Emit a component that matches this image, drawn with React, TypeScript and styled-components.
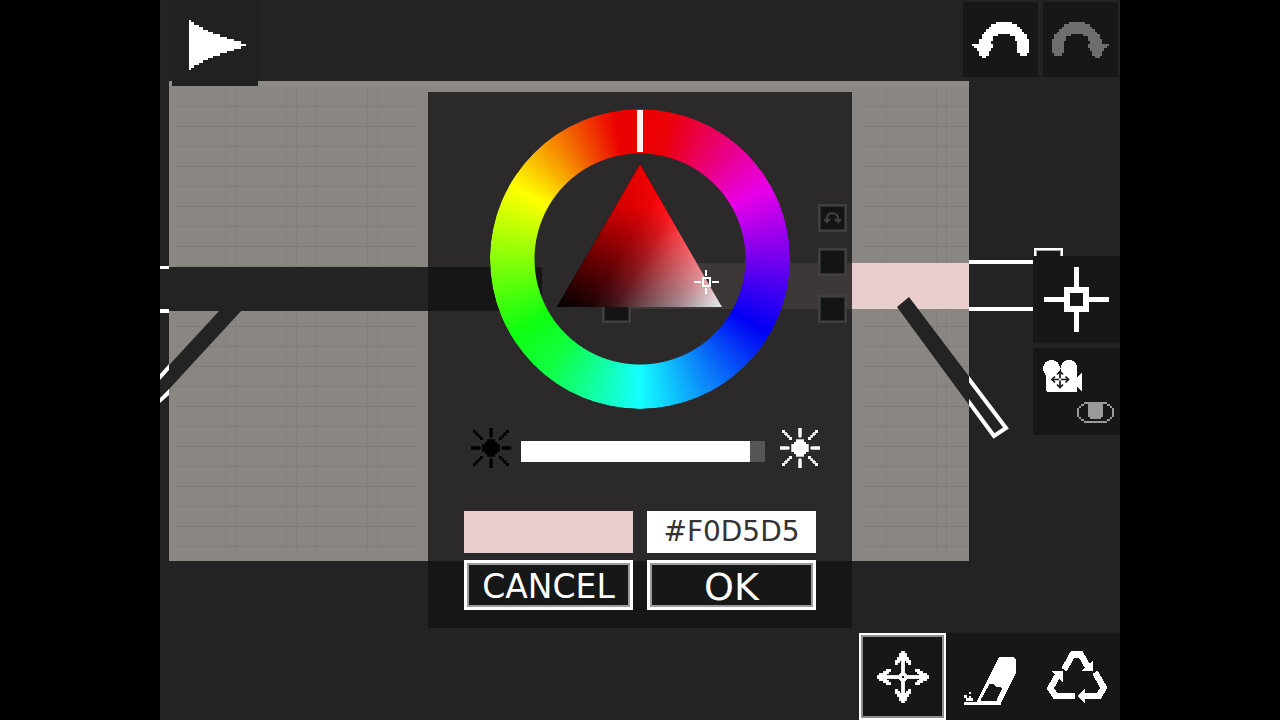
import React, { useState } from 'react';
import styled, { createGlobalStyle } from 'styled-components';

const GlobalStyle = createGlobalStyle`
  *, *::before, *::after { box-sizing: border-box; }
  body {
    margin: 0;
    background: #000;
    font-family: 'DejaVu Sans', sans-serif;
  }
`;

const Stage = styled.main`
  position: relative;
  display: flex;
  flex-direction: column;
  width: 75vw;
  min-height: 100vh;
  margin: 0 auto;
  overflow: hidden;
  background: #232323;
`;

const SceneCanvas = styled.svg`
  position: absolute;
  inset: 0;
  width: 100%;
  height: 100%;
`;

const TopBar = styled.header`
  position: relative;
  display: flex;
  justify-content: space-between;
  align-items: flex-start;
  padding: 0 2px 0 12px;
`;

const History = styled.div`
  display: flex;
  gap: 5px;
  padding-top: 2px;
`;

const SideTools = styled.nav`
  position: relative;
  flex: 1;
  display: flex;
  flex-direction: column;
  justify-content: center;
  align-items: flex-end;
  gap: 5px;
  padding-bottom: 28px;
`;

const BottomTools = styled.footer`
  position: relative;
  display: flex;
  justify-content: flex-end;
`;

const ToolButton = styled.button<{ $size: number; $tone?: string; $selected?: boolean }>`
  display: flex;
  align-items: center;
  justify-content: center;
  width: ${(p) => p.$size}px;
  height: ${(p) => p.$size}px;
  padding: 0;
  border: ${(p) => (p.$selected ? '2px solid #fff' : '0')};
  box-shadow: ${(p) => (p.$selected ? 'inset 0 0 0 2px #8f8f8f' : 'none')};
  background: ${(p) => p.$tone ?? '#171717'};
  color: #fff;
  cursor: pointer;

  &:disabled {
    color: #6e6e6e;
    cursor: default;
  }
`;

const PlayButton = styled(ToolButton)`
  padding: 3px 0 0 4px;
`;

const CameraStack = styled.span`
  display: flex;
  flex-direction: column;
  gap: 9px;
  width: 74px;
  padding-left: 3px;
`;

const EyeSlot = styled.span`
  display: flex;
  justify-content: flex-end;
  color: #9a9a9a;
`;

const Icon = styled.svg`
  display: block;
  fill: currentColor;
`;

const ModalLayer = styled.div`
  position: absolute;
  inset: 0;
  display: flex;
  align-items: center;
  justify-content: center;
  pointer-events: none;
`;

const Picker = styled.form`
  display: flex;
  flex-direction: column;
  align-items: center;
  width: 424px;
  max-width: 100%;
  padding: 17px 36px 18px;
  background: rgba(21, 20, 21, 0.81);
  pointer-events: auto;
`;

const Wheel = styled.div`
  position: relative;
  width: 300px;
  height: 300px;
`;

const HueRing = styled.div`
  width: 100%;
  height: 100%;
  border-radius: 50%;
  background: conic-gradient(
    #eb0000 0deg,
    #eb0008 12deg,
    #e800e8 60deg,
    #0000f4 120deg,
    #14ffff 180deg,
    #10ff40 220deg,
    #10ff10 240deg,
    #ffff00 300deg,
    #eb0000 350deg,
    #eb0000 360deg
  );
  mask-image: radial-gradient(circle, transparent 105px, #000 106px);
`;

const WheelOverlay = styled.svg`
  position: absolute;
  inset: 0;
  isolation: isolate;
`;

const Additive = styled.polygon`
  mix-blend-mode: plus-lighter;
`;

const BrightnessRow = styled.div`
  align-self: stretch;
  display: flex;
  align-items: center;
  gap: 10px;
  margin: 19px -4px 43px 7px;
`;

const SunMark = styled.span<{ $color: string }>`
  color: ${(p) => p.$color};
`;

const Brightness = styled.input<{ $percent: number }>`
  flex: 1;
  min-width: 0;
  height: 21px;
  margin: 6px 5px 0 0;
  appearance: none;
  background: linear-gradient(to right, #fff ${(p) => p.$percent}%, #565656 ${(p) => p.$percent}%);

  &::-webkit-slider-thumb {
    appearance: none;
    width: 1px;
    height: 21px;
  }
`;

const Fields = styled.div`
  align-self: stretch;
  display: grid;
  grid-template-columns: 1fr 1fr;
  column-gap: 14px;
  row-gap: 7px;
`;

const Swatch = styled.output`
  height: 42px;
  background: #e9cdcf;
`;

const HexField = styled.input`
  width: 100%;
  height: 42px;
  padding: 0;
  border: 0;
  border-radius: 0;
  background: #fff;
  color: #333;
  font: 28px/42px 'DejaVu Sans', sans-serif;
  text-align: center;
`;

const ActionButton = styled.button<{ $large?: boolean }>`
  height: 50px;
  padding: 4px 0 0;
  border: 3px solid #fff;
  box-shadow: inset 0 0 0 2px #9b9b9b;
  background: #161817;
  color: #fff;
  font-family: 'DejaVu Sans', sans-serif;
  font-size: ${(p) => (p.$large ? 38 : 33)}px;
  line-height: 40px;
  cursor: pointer;
`;

/* Each row lists its filled runs as "first-last" column pairs. */
function pixelPath(rows: string[]) {
  return rows
    .map((row, y) =>
      row
        .split(' ')
        .filter(Boolean)
        .map((run) => {
          const [a, b] = run.split('-').map(Number);
          const width = (b ?? a) - a + 1;
          return `M${a} ${y}h${width}v1h${-width}z`;
        })
        .join(''),
    )
    .join('');
}

interface PixelIconProps {
  rows: string[];
  cols: number;
  width: number;
  height: number;
  flip?: boolean;
  bold?: number;
}

function PixelIcon({ rows, cols, width, height, flip, bold = 0 }: PixelIconProps) {
  return (
    <Icon
      width={width}
      height={height}
      viewBox={`0 0 ${cols} ${rows.length}`}
      preserveAspectRatio="none"
      shapeRendering="crispEdges"
      aria-hidden="true"
    >
      <path
        d={pixelPath(rows)}
        stroke={bold ? 'currentColor' : 'none'}
        strokeWidth={bold}
        transform={flip ? `translate(${cols} 0) scale(-1 1)` : undefined}
      />
    </Icon>
  );
}

const playHalf = [0, 1, 3, 5, 7, 9, 12, 15, 18, 21];
const playRows = [...playHalf, 23, ...[...playHalf].reverse()].map((end) => `0-${end}`);

const undoRows = [
  '10-16', '8-18', '7-19', '6-20', '5-21',
  '4-10 16-22', '4-8 18-22', '3-8 18-23', '3-7 19-23',
  '0-8 19-23', '1-8 19-23', '2-7 19-23', '3-6 19-23', '3-6 20-22', '4-5',
];

const moveRows = [
  '11', '10-12', '10-12', '9-13', '8-9 11 13-14', '8 11 14', '11', '11',
  '4-5 11 17-18', '3-4 11 18-19', '1-3 10-12 19-21', '0-10 12-22', '1-3 10-12 19-21',
  '3-4 11 18-19', '4-5 11 17-18', '11', '11', '8 11 14', '8-9 11 13-14',
  '9-13', '10-12', '10-12', '11',
];

const eyeRows = [
  '4-15', '2-3 6-13 16-17', '1-1 6-13 18', '0 6-13 19', '0 6-13 19', '0 6-13 19',
  '0 6-13 19', '0 6-13 19', '1 7-12 18', '2-3 16-17', '4-15',
];

const sunTop = ['8', '1 8 15', '2 8 14', '3 8 13', '4 12', '7-9', '6-10', '5-11'];
const sunRows = [...sunTop, '0-3 5-11 13-16', ...[...sunTop].reverse()];

function Sun() {
  return <PixelIcon rows={sunRows} cols={17} width={40} height={40} bold={0.3} />;
}

function TargetIcon() {
  return (
    <Icon width="65" height="65" viewBox="0 0 65 65" shapeRendering="crispEdges" aria-hidden="true">
      <path
        fillRule="evenodd"
        d="M30 0h5v20h-5zM30 45h5v20h-5zM0 30h20v5h-20zM45 30h20v5h-20zM20 20h25v25h-25zM26 26v13h13v-13z"
      />
    </Icon>
  );
}

function CameraIcon() {
  return (
    <Icon width="39" height="33" viewBox="0 0 39 33" aria-hidden="true">
      <g shapeRendering="crispEdges">
        <circle cx="8.5" cy="8.500" r="8.500" />
        <circle cx="26" cy="8.500" r="8.500" />
        <path d="M3 12h31v19l-1 1H4l-1-1zM33 18l6-6v20l-6-6z" />
      </g>
      <g fill="none" stroke="#171717" strokeWidth="1.7">
        <path d="M17 11v17M9 19.500h17" />
        <path d="M14 14.500l3-3 3 3M14 24.500l3 3 3-3M12 16.500l-3 3 3 3M22.500 16.500l3 3-3 3" />
      </g>
      <path d="M16 18.500h2v2h-2z" />
    </Icon>
  );
}

function EraserIcon() {
  return (
    <Icon width="52" height="56" viewBox="0 -24 156 168" shapeRendering="crispEdges" aria-hidden="true">
      <path d="M104 1h46l6 7v40L112 136v3H36z" />
      <path fill="#171717" d="M77 80h11l9 9 16 3v6l-14 27-1 8H50l2-8z" />
      <path d="M0 136h110v7H0zM0 114h8v8H0zM14 104h7v7h-7zM7 124h7v7H7zM14 117h7v14h-7zM21 124h6v7h-6z" />
    </Icon>
  );
}

function RecycleIcon() {
  return (
    <Icon width="60" height="52" viewBox="0 0 180 156" shapeRendering="crispEdges" aria-hidden="true">
      <g fill="none" stroke="currentColor" strokeWidth="19">
        <path d="M51 56L77 10h24l24 42" />
        <path d="M84 135H25L10 112l24-42" />
        <path d="M144 64l26 46-14 25h-44" />
      </g>
      <path d="M102 60h37V29zM14 61h35v35zM90 135l24-22v43z" />
    </Icon>
  );
}

const gridRows = Array.from({ length: 23 }, (_, i) => 106 + i * 20);
const gridColumns = [225, 235, 286, 296, 316, 367, 377, 886, 936, 946];
const sockets = [
  [818, 204],
  [818, 248],
  [818, 295],
  [602, 295],
  [1034, 248],
];

function Scene() {
  return (
    <SceneCanvas viewBox="160 0 960 720" preserveAspectRatio="xMidYMid slice" aria-hidden="true">
      <defs>
        <clipPath id="outside">
          <rect x="969" y="200" width="151" height="300" />
        </clipPath>
      </defs>
      <rect x="169" y="82" width="800" height="479" fill="#8a8783" />
      <rect x="169" y="81" width="800" height="5" fill="#8f8b89" />
      <g fill="#807d79">
        {gridRows.map((y) => (
          <React.Fragment key={y}>
            <rect x="176" y={y} width="240" height="1" />
            <rect x="864" y={y} width="104" height="1" />
          </React.Fragment>
        ))}
        {gridColumns.map((x) => (
          <rect key={x} x={x} y="88" width="1" height="464" opacity="0.7" />
        ))}
      </g>

      <rect x="160" y="267" width="382" height="44" fill="#232323" />
      <path d="M220 310h22L160 399v-24z" fill="#232323" />
      <path d="M160 266h9v3h-9zM160 309h9v4h-9z" fill="#fff" />
      <path d="M169 364v6L160 380v-6zM169 389v6L160 403v-5z" fill="#fff" />

      <rect x="617" y="263" width="352" height="46" fill="#e9cdcf" />
      <path d="M969 260h65v4h-65zM969 307h65v4h-65z" fill="#fff" />
      <path d="M897 307L909 297L1008 428L994 439z" fill="#232323" />
      <path
        d="M899 307L909 300L1006 428L994 436z"
        fill="none"
        stroke="#fff"
        strokeWidth="4"
        clipPath="url(#outside)"
      />

      {sockets.map(([x, y]) => (
        <g key={`${x}-${y}`}>
          <rect x={x} y={y} width="29" height="28" fill="#fff" />
          <rect x={x + 2} y={y + 2} width="25" height="24" fill="#a0a0a0" />
          <rect x={x + 3} y={y + 3} width="23" height="22" fill="#171717" />
        </g>
      ))}
      <path
        d="M827 221v-3q0-4 5-5q6 1 6 5v3M824 219l3 3 3-3M835 219l3 3 3-3"
        fill="none"
        stroke="#fff"
        strokeWidth="2"
      />
      <circle cx="1115.5" cy="4.5" r="2.5" fill="#d08a2c" />
    </SceneCanvas>
  );
}

const triangle = '150,55 232,198 67,198';

function ColorWheel() {
  return (
    <Wheel role="img" aria-label="Colour wheel">
      <HueRing />
      <WheelOverlay width="300" height="300" viewBox="0 0 300 300">
        <defs>
          <linearGradient id="hue" gradientUnits="userSpaceOnUse" x1="0" y1="55" x2="0" y2="198">
            <stop offset="0" stopColor="#ea0000" />
            <stop offset="0.3" stopColor="#d00000" />
            <stop offset="0.7" stopColor="#560000" />
            <stop offset="1" stopColor="#000" />
          </linearGradient>
          <linearGradient id="light" gradientUnits="userSpaceOnUse" x1="108" y1="127" x2="231" y2="198">
            <stop offset="0" stopColor="#000" />
            <stop offset="0.2" stopColor="#180306" />
            <stop offset="0.35" stopColor="#3c161c" />
            <stop offset="0.5" stopColor="#64444a" />
            <stop offset="0.75" stopColor="#a08a90" />
            <stop offset="1" stopColor="#e0eeee" />
          </linearGradient>
        </defs>
        <polygon points={triangle} fill="url(#hue)" />
        <Additive points={triangle} fill="url(#light)" />
        <rect x="147" y="1" width="6" height="42" fill="#fff4ee" />
        <g fill="#fff" shapeRendering="crispEdges">
          <path fillRule="evenodd" d="M212 168h9v10h-9zM214 170v6h5v-6z" />
          <path d="M215 161h2v6h-2zM215 179h2v6h-2zM204 172h7v2h-7zM222 172h7v2h-7z" />
        </g>
      </WheelOverlay>
    </Wheel>
  );
}

export default function App() {
  const [level, setLevel] = useState(94);
  const [hex, setHex] = useState('#F0D5D5');

  return (
    <Stage>
      <GlobalStyle />
      <Scene />

      <TopBar>
        <PlayButton $size={86} $tone="#212121" type="button" aria-label="Play">
          <PixelIcon rows={playRows} cols={24} width={57} height={50} />
        </PlayButton>
        <History>
          <ToolButton $size={75} type="button" aria-label="Undo">
            <PixelIcon rows={undoRows} cols={24} width={57} height={36} />
          </ToolButton>
          <ToolButton $size={75} type="button" aria-label="Redo" disabled>
            <PixelIcon rows={undoRows} cols={24} width={57} height={36} flip />
          </ToolButton>
        </History>
      </TopBar>

      <SideTools aria-label="View tools">
        <ToolButton $size={87} type="button" aria-label="Target">
          <TargetIcon />
        </ToolButton>
        <ToolButton $size={87} type="button" aria-label="Move camera">
          <CameraStack>
            <CameraIcon />
            <EyeSlot>
              <PixelIcon rows={eyeRows} cols={20} width={37} height={21} />
            </EyeSlot>
          </CameraStack>
        </ToolButton>
      </SideTools>

      <BottomTools>
        <ToolButton $size={87} $selected type="button" aria-label="Move" aria-pressed="true">
          <PixelIcon rows={moveRows} cols={23} width={52} height={52} bold={0.4} />
        </ToolButton>
        <ToolButton $size={87} type="button" aria-label="Erase">
          <EraserIcon />
        </ToolButton>
        <ToolButton $size={87} type="button" aria-label="Recycle">
          <RecycleIcon />
        </ToolButton>
      </BottomTools>

      <ModalLayer>
        <Picker aria-label="Choose a colour" onSubmit={(e) => e.preventDefault()}>
          <ColorWheel />
          <BrightnessRow>
            <SunMark $color="#000">
              <Sun />
            </SunMark>
            <Brightness
              type="range"
              aria-label="Brightness"
              min={0}
              max={100}
              value={level}
              $percent={level}
              onChange={(e) => setLevel(Number(e.target.value))}
            />
            <SunMark $color="#fff">
              <Sun />
            </SunMark>
          </BrightnessRow>
          <Fields>
            <Swatch aria-label="Selected colour" />
            <HexField aria-label="Hex value" value={hex} onChange={(e) => setHex(e.target.value)} />
            <ActionButton type="button">CANCEL</ActionButton>
            <ActionButton type="submit" $large>
              OK
            </ActionButton>
          </Fields>
        </Picker>
      </ModalLayer>
    </Stage>
  );
}
